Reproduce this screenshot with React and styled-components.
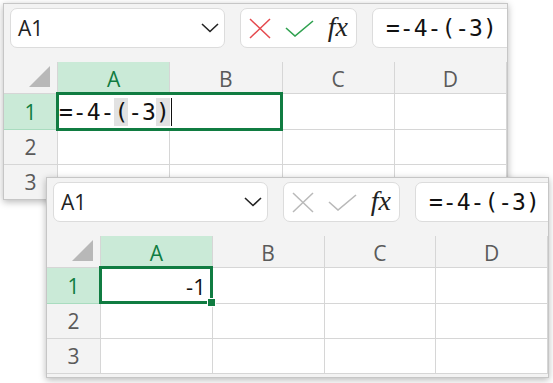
import React from "react";
import styled, { createGlobalStyle } from "styled-components";

const Global = createGlobalStyle`
  html, body { margin: 0; padding: 0; background: #ffffff; }
  body { width: 553px; height: 383px; overflow: hidden; position: relative; font-family: "Open Sans", "Noto Sans", sans-serif; }
`;

const Desktop = styled.div`
  position: relative;
  width: 553px;
  height: 383px;
`;

const Window = styled.div`
  position: absolute;
  left: ${(p) => p.$x}px;
  top: ${(p) => p.$y}px;
  width: ${(p) => p.$w}px;
  height: ${(p) => p.$h}px;
  background: #f3f3f3;
  border: 1px solid #c6c6c6;
  box-shadow: 0 2px 7px rgba(0, 0, 0, 0.28);
  overflow: hidden;
  display: flex;
  flex-direction: column;
`;

const Toolbar = styled.div`
  display: flex;
  align-items: stretch;
  gap: 15px;
  height: 40px;
  padding: 4px 0 0 6px;
  margin-bottom: 14px;
  flex: none;
`;

const Box = styled.div`
  flex: none;
  background: #ffffff;
  border: 1px solid #dcdcdc;
  border-radius: 7px;
  box-sizing: border-box;
  display: flex;
  align-items: center;
`;

const NameBox = styled(Box)`
  width: 215px;
  padding: 0 5px 0 7px;
  justify-content: space-between;
  font-size: 21px;
  color: #222;
`;

const IconBox = styled(Box)`
  width: 117px;
  padding: 0 8px 0 8px;
  justify-content: space-between;
`;

const FormulaBox = styled(Box)`
  width: 200px;
  padding-left: 13px;
  font-family: "DejaVu Sans Mono", monospace;
  font-size: 23px;
  color: #111;
`;

const Fx = styled.span`
  font-family: "Liberation Serif", "DejaVu Serif", serif;
  font-style: italic;
  font-size: 28px;
  line-height: 1;
  color: #222;
  margin-top: -3px;
`;

const Sheet = styled.div`
  position: relative;
  display: grid;
  grid-template-columns: 54px repeat(4, 1fr);
  grid-template-rows: 32px 36px 35px 35px;
  flex: none;
`;

const Corner = styled.div`
  border-right: 1px solid #d6d6d6;
  border-bottom: 1px solid #d6d6d6;
  position: relative;
  &::after {
    content: "";
    position: absolute;
    right: 7px;
    bottom: 6px;
    width: 0;
    height: 0;
    border-style: solid;
    border-width: 0 0 21px 21px;
    border-color: transparent transparent #b8b8b8 transparent;
  }
`;

const ColHead = styled.div`
  display: flex;
  align-items: center;
  justify-content: center;
  font-size: 21px;
  padding-top: 2px;
  color: ${(p) => (p.$sel ? "#107c41" : "#5a5a5a")};
  background: ${(p) => (p.$sel ? "#caead7" : "transparent")};
  border-right: 1px solid #d6d6d6;
  border-bottom: 1px solid ${(p) => (p.$sel ? "#a9dcbf" : "#d6d6d6")};
`;

const RowHead = styled.div`
  display: flex;
  align-items: center;
  justify-content: center;
  font-size: 21px;
  color: ${(p) => (p.$sel ? "#107c41" : "#5a5a5a")};
  background: ${(p) => (p.$sel ? "#caead7" : "transparent")};
  border-right: 1px solid #d6d6d6;
  border-bottom: 1px solid ${(p) => (p.$sel ? "#a9dcbf" : "#d6d6d6")};
`;

const Cell = styled.div`
  position: relative;
  z-index: ${(p) => (p.$active ? 3 : "auto")};
  background: #ffffff;
  border-right: 1px solid #d6d6d6;
  border-bottom: 1px solid #d6d6d6;
  display: flex;
  align-items: center;
  justify-content: flex-end;
  padding-right: 6px;
  color: #111;
`;

const EditBox = styled.div`
  position: absolute;
  left: -2px;
  top: -2px;
  width: 227px;
  height: 39px;
  box-sizing: border-box;
  border: 3px solid #107c41;
  background: #ffffff;
  display: flex;
  align-items: center;
  padding-left: 0;
  font-family: "DejaVu Sans Mono", monospace;
  font-size: 23px;
  color: #111;
  z-index: 2;
`;

const Paren = styled.span`
  background: ${(p) => (p.$hl ? "#e2e2e2" : "transparent")};
  display: inline-block;
  line-height: 28px;
`;

const Caret = styled.span`
  display: inline-block;
  width: 1.5px;
  height: 28px;
  background: #111;
  margin-left: 1px;
`;

const SelBox = styled.div`
  position: absolute;
  left: -2px;
  top: -2px;
  right: -1px;
  bottom: -1px;
  border: 3px solid #107c41;
  pointer-events: none;
  z-index: 3;
  &::after {
    content: "";
    position: absolute;
    right: -6px;
    bottom: -6px;
    width: 7px;
    height: 7px;
    background: #107c41;
    border: 1px solid #ffffff;
  }
`;

const CellText = styled.span`
  position: relative;
  z-index: 1;
  font-size: 22px;
`;

function Chevron() {
  return (
    <svg width="18" height="10" viewBox="0 0 18 10">
      <polyline points="1,1 9,8.5 17,1" fill="none" stroke="#222" strokeWidth="1.6" />
    </svg>
  );
}

function Cross({ color }) {
  return (
    <svg width="22" height="21" viewBox="0 0 22 21">
      <line x1="1" y1="1" x2="21" y2="20" stroke={color} strokeWidth="1.5" />
      <line x1="21" y1="1" x2="1" y2="20" stroke={color} strokeWidth="1.5" />
    </svg>
  );
}

function Check({ color }) {
  return (
    <svg width="29" height="17" viewBox="0 0 29 17">
      <polyline points="1,8 10,16 28,1" fill="none" stroke={color} strokeWidth="1.6" />
    </svg>
  );
}

function Excel({ x, y, w, h, editing }) {
  return (
    <Window $x={x} $y={y} $w={w} $h={h}>
      <Toolbar>
        <NameBox>
          <span>A1</span>
          <Chevron />
        </NameBox>
        <IconBox>
          <Cross color={editing ? "#e5484d" : "#b9b9b9"} />
          <Check color={editing ? "#2fa14f" : "#b9b9b9"} />
          <Fx>fx</Fx>
        </IconBox>
        <FormulaBox>=-4-(-3)</FormulaBox>
      </Toolbar>
      <Sheet>
        <Corner />
        <ColHead $sel>A</ColHead>
        <ColHead>B</ColHead>
        <ColHead>C</ColHead>
        <ColHead>D</ColHead>

        <RowHead $sel>1</RowHead>
        <Cell $active>
          {editing ? (
            <EditBox>
              <span>=-4-</span>
              <Paren $hl>(</Paren>
              <span>-3</span>
              <Paren $hl>)</Paren>
              <Caret />
            </EditBox>
          ) : (
            <>
              <CellText>-1</CellText>
              <SelBox />
            </>
          )}
        </Cell>
        <Cell />
        <Cell />
        <Cell />

        <RowHead>2</RowHead>
        <Cell />
        <Cell />
        <Cell />
        <Cell />

        <RowHead>3</RowHead>
        <Cell />
        <Cell />
        <Cell />
        <Cell />
      </Sheet>
    </Window>
  );
}

export default function App() {
  return (
    <Desktop>
      <Global />
      <Excel x={3} y={3} w={503} h={195} editing />
      <Excel x={46} y={177} w={501} h={199} />
    </Desktop>
  );
}
